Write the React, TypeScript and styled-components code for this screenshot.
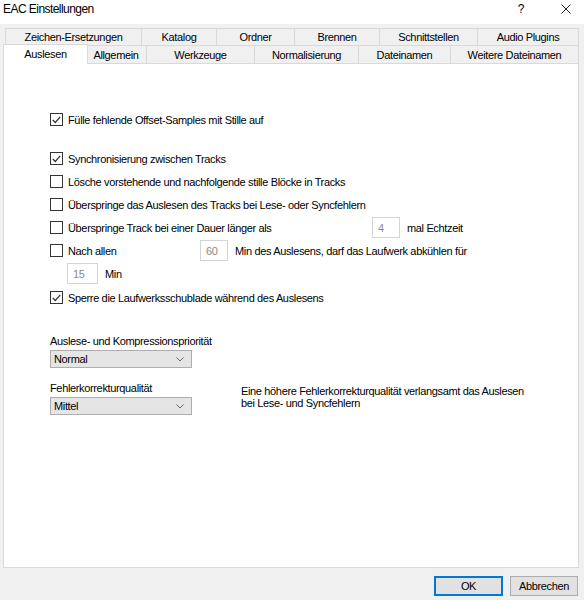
import React from "react";
import styled, { createGlobalStyle } from "styled-components";

const GlobalStyle = createGlobalStyle`
  html, body {
    margin: 0;
    padding: 0;
    background: #f0f0f0;
  }
  body {
    font-family: "Liberation Sans", Arial, sans-serif;
    font-size: 11px;
    letter-spacing: -0.35px;
    color: #000;
  }
`;

const Dialog = styled.div`
  width: 584px;
  height: 600px;
  display: flex;
  flex-direction: column;
  background: #f0f0f0;
  overflow: hidden;
`;

const TitleBar = styled.div`
  height: 24px;
  flex: none;
  display: flex;
  align-items: flex-start;
  background: #fff;
  padding-left: 3px;
`;

const Title = styled.div`
  flex: 1;
  font-size: 12px;
  letter-spacing: -0.55px;
  line-height: 16px;
  padding-top: 1px;
`;

const TitleButton = styled.div<{ $w: number }>`
  width: ${(p) => p.$w}px;
  height: 18px;
  display: flex;
  align-items: center;
  justify-content: center;
  font-size: 12px;
`;

const TabStrip = styled.div`
  flex: none;
  display: flex;
  flex-direction: column;
  padding: 4px 0 0 5px;
`;

const TabRow = styled.div<{ $h: number }>`
  display: flex;
  align-items: flex-end;
  height: ${(p) => p.$h}px;
`;

const Tab = styled.div<{ $w: number; $active?: boolean }>`
  box-sizing: border-box;
  width: ${(p) => p.$w + (p.$active ? 4 : 0)}px;
  height: ${(p) => (p.$active ? "20px" : "100%")};
  border: 1px solid #d9d9d9;
  border-bottom: none;
  background: ${(p) => (p.$active ? "#fff" : "#f0f0f0")};
  display: flex;
  align-items: center;
  justify-content: center;
  white-space: nowrap;
  position: relative;
  z-index: ${(p) => (p.$active ? 2 : 1)};
  margin-bottom: ${(p) => (p.$active ? -1 : 0)}px;
  margin-left: ${(p) => (p.$active ? -2 : 0)}px;
  margin-right: ${(p) => (p.$active ? -2 : 0)}px;
  padding-bottom: ${(p) => (p.$active ? 2 : 0)}px;

  & + & {
    margin-left: ${(p) => (p.$active ? -3 : -1)}px;
  }
`;

const Panel = styled.div`
  flex: 1;
  margin: 0 5px 0 3px;
  border: 1px solid #d9d9d9;
  background: #fff;
  padding: 44px 0 0 46px;
  display: flex;
  flex-direction: column;
`;

const Row = styled.div<{ $gap?: number; $indent?: number }>`
  height: 23px;
  display: flex;
  align-items: center;
  margin-top: ${(p) => p.$gap ?? 0}px;
  padding-left: ${(p) => p.$indent ?? 0}px;
  white-space: nowrap;
`;

const Box = styled.span`
  box-sizing: border-box;
  width: 13px;
  height: 13px;
  border: 1px solid #333;
  background: #fff;
  flex: none;
  display: flex;
  align-items: center;
  justify-content: center;
  margin-right: 5px;
`;

const Label = styled.span<{ $w?: number }>`
  display: inline-block;
  width: ${(p) => (p.$w ? `${p.$w}px` : "auto")};
  flex: none;
`;

const Field = styled.span<{ $w: number }>`
  box-sizing: border-box;
  width: ${(p) => p.$w}px;
  height: 21px;
  border: 1px solid #d4d4d4;
  background: #fff;
  color: #8a8a8a;
  display: flex;
  align-items: center;
  padding-left: 5px;
  margin-right: 7px;
  flex: none;
`;

const GroupLabel = styled.div<{ $gap: number }>`
  margin-top: ${(p) => p.$gap}px;
  height: 13px;
  line-height: 13px;
`;

const SelectRow = styled.div`
  display: flex;
  align-items: flex-start;
  margin-top: 2px;
`;

const Select = styled.div`
  box-sizing: border-box;
  width: 142px;
  height: 18px;
  border: 1px solid #adadad;
  background: #e5e5e5;
  display: flex;
  align-items: center;
  justify-content: space-between;
  padding: 0 7px 0 3px;
  flex: none;
`;

const Note = styled.div`
  margin: -12px 0 0 49px;
  line-height: 12px;
`;

const Footer = styled.div`
  flex: none;
  height: 32px;
  display: flex;
  justify-content: flex-end;
  align-items: flex-start;
  gap: 7px;
  padding: 8px 6px 0 0;
  box-sizing: border-box;
`;

const Button = styled.div<{ $default?: boolean }>`
  box-sizing: border-box;
  width: ${(p) => (p.$default ? 69 : 68)}px;
  height: 20px;
  background: #e1e1e1;
  border: 1px solid ${(p) => (p.$default ? "#0078d7" : "#adadad")};
  box-shadow: ${(p) => (p.$default ? "inset 0 0 0 1px #0078d7" : "none")};
  display: flex;
  align-items: center;
  justify-content: center;
`;

const Check = () => (
  <svg width="9" height="8" viewBox="0 0 9 8">
    <polyline points="0.8,4 3.3,6.5 8.2,0.8" fill="none" stroke="#333" strokeWidth="1.2" />
  </svg>
);

const Chevron = () => (
  <svg width="8" height="5" viewBox="0 0 8 5">
    <polyline points="0.5,0.5 4,4 7.5,0.5" fill="none" stroke="#666" strokeWidth="1" />
  </svg>
);

const CheckBox = ({ checked }: { checked?: boolean }) => <Box>{checked && <Check />}</Box>;

const topTabs: [string, number][] = [
  ["Zeichen-Ersetzungen", 137],
  ["Katalog", 76],
  ["Ordner", 79],
  ["Brennen", 86],
  ["Schnittstellen", 99],
  ["Audio Plugins", 102],
];

const bottomTabs: [string, number][] = [
  ["Auslesen", 81],
  ["Allgemein", 62],
  ["Werkzeuge", 109],
  ["Normalisierung", 105],
  ["Dateinamen", 93],
  ["Weitere Dateinamen", 129],
];

export default function App() {
  return (
    <>
      <GlobalStyle />
      <Dialog>
        <TitleBar>
          <Title>EAC Einstellungen</Title>
          <TitleButton $w={54}>?</TitleButton>
          <TitleButton $w={36}>
            <svg width="10" height="10" viewBox="0 0 10 10">
              <path d="M0.5 0.5 L9.5 9.5 M9.5 0.5 L0.5 9.5" stroke="#222" strokeWidth="1" />
            </svg>
          </TitleButton>
        </TitleBar>

        <TabStrip>
          <TabRow $h={17}>
            {topTabs.map(([name, w]) => (
              <Tab key={name} $w={w}>
                {name}
              </Tab>
            ))}
          </TabRow>
          <TabRow $h={18}>
            {bottomTabs.map(([name, w], i) => (
              <Tab key={name} $w={w} $active={i === 0}>
                {name}
              </Tab>
            ))}
          </TabRow>
        </TabStrip>

        <Panel>
          <Row>
            <CheckBox checked />
            Fülle fehlende Offset-Samples mit Stille auf
          </Row>
          <Row $gap={16}>
            <CheckBox checked />
            Synchronisierung zwischen Tracks
          </Row>
          <Row>
            <CheckBox />
            Lösche vorstehende und nachfolgende stille Blöcke in Tracks
          </Row>
          <Row>
            <CheckBox />
            Überspringe das Auslesen des Tracks bei Lese- oder Syncfehlern
          </Row>
          <Row>
            <CheckBox />
            <Label $w={304}>Überspringe Track bei einer Dauer länger als</Label>
            <Field $w={28}>4</Field>
            mal Echtzeit
          </Row>
          <Row>
            <CheckBox />
            <Label $w={132}>Nach allen</Label>
            <Field $w={28}>60</Field>
            Min des Auslesens, darf das Laufwerk abkühlen für
          </Row>
          <Row $indent={17}>
            <Field $w={31}>15</Field>
            Min
          </Row>
          <Row $gap={1}>
            <CheckBox checked />
            Sperre die Laufwerksschublade während des Auslesens
          </Row>

          <GroupLabel $gap={26}>Auslese- und Kompressionspriorität</GroupLabel>
          <SelectRow>
            <Select>
              Normal
              <Chevron />
            </Select>
          </SelectRow>

          <GroupLabel $gap={14}>Fehlerkorrekturqualität</GroupLabel>
          <SelectRow>
            <Select>
              Mittel
              <Chevron />
            </Select>
            <Note>
              Eine höhere Fehlerkorrekturqualität verlangsamt das Auslesen
              <br />
              bei Lese- und Syncfehlern
            </Note>
          </SelectRow>
        </Panel>

        <Footer>
          <Button $default>OK</Button>
          <Button>Abbrechen</Button>
        </Footer>
      </Dialog>
    </>
  );
}
